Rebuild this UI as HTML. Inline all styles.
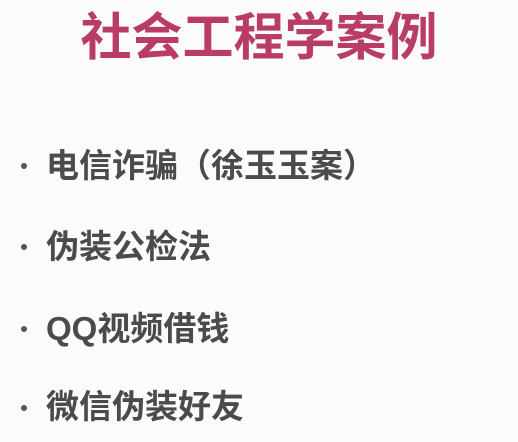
<!DOCTYPE html>
<html><head><meta charset="utf-8"><style>
html,body{margin:0;padding:0}
body{width:518px;height:442px;background:#fbfbfa;position:relative;overflow:hidden;font-family:"Liberation Sans","Noto Sans CJK SC",sans-serif}
.t{position:absolute;left:0;width:518px;text-align:center;top:12px;font-size:51px;line-height:51px;font-weight:bold;color:#b93c68}
.i{position:absolute;left:46px;font-size:33px;line-height:33px;font-weight:bold;color:#4b4b4b;white-space:nowrap}
.d{position:absolute;left:21px;width:6px;height:6px;border-radius:50%;background:#555}
</style></head><body>
<div class="t">社会工程学案例</div>
<div class="d" style="top:163px"></div><div class="i" style="top:149px">电信诈骗（徐玉玉案）</div>
<div class="d" style="top:244px"></div><div class="i" style="top:230px">伪装公检法</div>
<div class="d" style="top:326px"></div><div class="i" style="top:312px">QQ视频借钱</div>
<div class="d" style="top:405px"></div><div class="i" style="top:390px">微信伪装好友</div>
</body></html>
